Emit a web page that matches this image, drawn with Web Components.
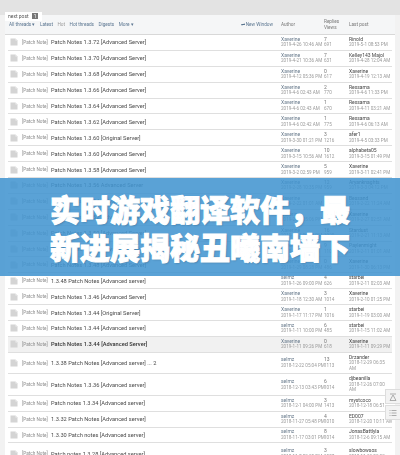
<!DOCTYPE html>
<html lang="zh">
<head>
<meta charset="utf-8">
<title>Patch Notes</title>
<style>
  html, body { margin: 0; padding: 0; }
  body { width: 400px; height: 455px; overflow: hidden; position: relative; background: #f2f2f2; font-family: Roboto, "Liberation Sans", sans-serif; }
</style>
</head>
<body>
<forum-board>
  <thread-row tag="[Patch Note]" title="Patch Notes 1.3.72 [Advanced Server]" author="Xaverine" date="2019-4-26 10:46 AM" replies="7" views="691" last="Rinold" lastdate="2019-5-1 08:53 PM"></thread-row>
  <thread-row tag="[Patch Note]" title="Patch Notes 1.3.70 [Advanced Server]" author="Xaverine" date="2019-4-21 10:36 AM" replies="7" views="631" last="Kelley143 Majol" lastdate="2019-4-28 12:04 AM"></thread-row>
  <thread-row tag="[Patch Note]" title="Patch Notes 1.3.68 [Advanced Server]" author="Xaverine" date="2019-4-12 05:36 PM" replies="0" views="617" last="Xaverine" lastdate="2019-4-19 12:13 AM"></thread-row>
  <thread-row tag="[Patch Note]" title="Patch Notes 1.3.66 [Advanced Server]" author="Xaverine" date="2019-4-6 02:43 AM" replies="2" views="770" last="Rexsama" lastdate="2019-4-6 11:33 PM"></thread-row>
  <thread-row tag="[Patch Note]" title="Patch Notes 1.3.64 [Advanced Server]" author="Xaverine" date="2019-4-6 02:43 AM" replies="1" views="670" last="Rexsama" lastdate="2019-4-11 03:21 AM"></thread-row>
  <thread-row tag="[Patch Note]" title="Patch Notes 1.3.62 [Advanced Server]" author="Xaverine" date="2019-4-6 02:42 AM" replies="1" views="775" last="Rexsama" lastdate="2019-4-6 06:13 AM"></thread-row>
  <thread-row tag="[Patch Note]" title="Patch Notes 1.3.60 [Original Server]" author="Xaverine" date="2019-3-30 01:21 PM" replies="3" views="1216" last="afer1" lastdate="2019-4-5 03:33 PM"></thread-row>
  <thread-row tag="[Patch Note]" title="Patch Notes 1.3.60 [Advanced Server]" author="Xaverine" date="2019-3-15 10:56 AM" replies="10" views="1612" last="alphabeta05" lastdate="2019-3-15 01:49 PM"></thread-row>
  <thread-row tag="[Patch Note]" title="Patch Notes 1.3.58 [Advanced Server]" author="Xaverine" date="2019-3-2 02:59 PM" replies="5" views="959" last="Xaverine" lastdate="2019-3-11 02:41 PM"></thread-row>
  <thread-row tag="[Patch Note]" title="Patch Notes 1.3.56 Advanced Server" author="Xaverine" date="2019-2-28 10:35 PM" replies="12" views="959" last="Aryanknaghts" lastdate="2019-3-3 04:12 PM"></thread-row>
  <thread-row tag="[Patch Note]" title="Patch Notes 1.3.54 [Advanced Server]" author="Xaverine" date="2019-2-22 01:01 AM" replies="1" views="807" last="Bessand" lastdate="2019-2-22 11:24 AM"></thread-row>
  <thread-row tag="[Patch Note]" title="Patch Notes 1.3.52 [Advanced Server]" author="Xaverine" date="2019-2-20 05:06 PM" replies="4" views="812" last="Xaverine" lastdate="2019-2-27 02:51 AM"></thread-row>
  <thread-row tag="[Patch Note]" title="Patch Notes 1.3.50 [Advanced Server]" author="Xaverine" date="2019-2-15 09:13 PM" replies="16" views="1020" last="Stardust" lastdate="2019-2-21 11:13 AM"></thread-row>
  <thread-row tag="[Patch Note]" title="Patch Notes 1.3.50 [Advanced Server] ... 2" author="Xaverine" date="2019-2-9 10:21 AM" replies="9" views="1104" last="Paylenmight" lastdate="2019-2-11 01:01 AM"></thread-row>
  <thread-row tag="[Patch Note]" title="Patch Notes 1.3.48 [Advanced Server]" author="Xaverine" date="2019-1-29 08:28 PM" replies="0" views="486" last="Xaverine" lastdate="2019-1-30 06:13 PM"></thread-row>
  <thread-row tag="[Patch Note]" title="1.3.48 Patch Notes [Advanced server]" author="selmz" date="2019-1-26 09:00 PM" replies="4" views="626" last="starbei" lastdate="2019-2-11 02:03 AM"></thread-row>
  <thread-row tag="[Patch Note]" title="Patch Notes 1.3.46 [Advanced Server]" author="Xaverine" date="2019-1-18 12:30 AM" replies="3" views="1014" last="Xaverine" lastdate="2019-2-10 01:25 PM"></thread-row>
  <thread-row tag="[Patch Note]" title="Patch Notes 1.3.44 [Original Server]" author="Xaverine" date="2019-1-17 11:17 PM" replies="1" views="1016" last="starbei" lastdate="2019-1-19 03:00 AM"></thread-row>
  <thread-row tag="[Patch Note]" title="Patch Notes 1.3.44 [Advanced server]" author="selmz" date="2019-1-11 10:00 PM" replies="6" views="485" last="starbei" lastdate="2019-1-15 11:02 AM"></thread-row>
  <thread-row hot tag="[Patch Note]" title="Patch Notes 1.3.44 [Advanced Server]" author="Xaverine" date="2019-1-11 09:26 PM" replies="0" views="618" last="Xaverine" lastdate="2019-1-11 09:29 PM"></thread-row>
  <thread-row tall tag="[Patch Note]" title="1.3.38 Patch Notes [Advanced server] ... 2" author="selmz" date="2018-12-22 05:04 PM" replies="13" views="1113" last="Drzander" lastdate="2018-12-29 06:35 AM"></thread-row>
  <thread-row tall tag="[Patch Note]" title="Patch Notes 1.3.36 [Advanced server]" author="selmz" date="2018-12-13 03:43 PM" replies="6" views="1014" last="djbeanilla" lastdate="2018-12-26 07:00 AM"></thread-row>
  <thread-row tag="[Patch Note]" title="Patch notes 1.3.34 [Advanced server]" author="selmz" date="2018-12-1 04:00 PM" replies="3" views="1413" last="mystcoco" lastdate="2018-12-18 06:51"></thread-row>
  <thread-row tag="[Patch Note]" title="1.3.32 Patch Notes [Advanced server]" author="selmz" date="2018-11-27 05:48 PM" replies="4" views="1010" last="ED007" lastdate="2018-12-20 10:11 AM"></thread-row>
  <thread-row tag="[Patch Note]" title="1.3.30 Patch notes [Advanced server]" author="selmz" date="2018-11-17 03:01 PM" replies="8" views="1014" last="JonasBattlyla" lastdate="2018-12-6 09:15 AM"></thread-row>
  <thread-row tall tag="[Patch Note]" title="Patch notes 1.3.28 [Advanced server]" author="selmz" date="2018-11-7 02:20 PM" replies="3" views="1007" last="slowbowsos" lastdate="2018-11-12 02:32"></thread-row>
</forum-board>
<side-tools></side-tools>
<headline-banner>实时游戏翻译软件，最新进展揭秘丑曦南墙下</headline-banner>

<script>
const boardTemplate = document.createElement('template');
boardTemplate.innerHTML = `
  <style>
    :host {
      display: block;
      height: 455px;
      overflow: hidden;
      color: #444;
      filter: blur(0.4px);
    }
    .top {
      height: 15px;
      background: #e3e3e3;
      padding: 3px 0 0 5px;
      box-sizing: border-box;
    }
    .next {
      display: inline-flex;
      align-items: center;
      gap: 3px;
      height: 9px;
      padding: 0 4px 0 3px;
      background: #fff;
      font-size: 5px;
      color: #555;
    }
    .next b {
      background: #777;
      color: #fff;
      padding: 0 2px;
      font-weight: 400;
    }
    .panel {
      margin: 0 5px;
      background: #fff;
      padding: 0 3px;
    }
    .filters {
      display: grid;
      grid-template-columns: 273px 43px 25px 1fr;
      align-items: center;
      height: 19px;
      margin: 0 -3px;
      padding: 0 3px;
      background: #f5f6f7;
      border-bottom: 1px solid #d8d8d8;
      font-size: 4.7px;
      color: #777;
    }
    .nav {
      display: flex;
      justify-content: space-between;
      align-items: center;
      padding-left: 1px;
      padding-right: 8px;
    }
    .links {
      display: flex;
      gap: 4.5px;
      color: #5a7590;
    }
    .links .muted { color: #999; }
    .win { color: #5a7590; }
    .replies { line-height: 5.6px; }
  </style>
  <div class="top"><span class="next">next post <b>1</b></span></div>
  <div class="panel">
    <div class="filters">
      <div class="nav">
        <div class="links">
          <span>All threads ▾</span>
          <span>Latest</span>
          <span class="muted">Hot</span>
          <span>Hot threads</span>
          <span>Digests</span>
          <span>More ▾</span>
        </div>
        <span class="win">⇌ New Window</span>
      </div>
      <span>Author</span>
      <span class="replies">Replies<br>Views</span>
      <span>Last post</span>
    </div>
    <slot></slot>
  </div>
`;

class ForumBoard extends HTMLElement {
  constructor() {
    super();
    const shadow = this.attachShadow({ mode: 'open' });
    shadow.append(boardTemplate.content.cloneNode(true));
  }
}

const rowTemplate = document.createElement('template');
rowTemplate.innerHTML = `
  <style>
    :host {
      display: grid;
      grid-template-columns: 273px 43px 25px 1fr;
      align-items: center;
      height: 15.9px;
      box-sizing: border-box;
      border-bottom: 1px solid #dfdfdf;
      background: #fff;
      white-space: nowrap;
      overflow: hidden;
    }
    :host([hot]) { background: #f1f1f1; }
    :host([tall]) { height: 21.5px; }
    :host([tall]) .last { white-space: normal; }
    .name {
      display: flex;
      align-items: center;
      padding-left: 2px;
    }
    svg { width: 8px; height: 8px; margin-right: 4px; flex: none; }
    .tag { font-size: 4.7px; color: #8a8a8a; width: 29px; }
    .title { font-size: 5.7px; color: #4a4a4a; }
    :host([hot]) .title { color: #333; font-weight: 500; }
    .cell { font-size: 4.6px; line-height: 5.6px; color: #9a9a9a; }
    .who { display: block; color: #66788a; font-size: 5px; }
    .last .who { color: #444; }
    .num { display: block; color: #777; font-size: 5px; }
  </style>
  <div class="name">
    <svg viewBox="0 0 8 8"><path d="M0.5 0.5H5.5L7.5 2.5V7.5H0.5Z" fill="#d4d4d4"/><path d="M5.5 0.5V2.5H7.5Z" fill="#eee"/></svg>
    <span class="tag"></span><span class="title"></span>
  </div>
  <div class="cell"><span class="who author"></span><span class="date"></span></div>
  <div class="cell"><span class="num replies"></span><span class="views"></span></div>
  <div class="cell last"><span class="who lastname"></span><span class="lastdate"></span></div>
`;

class ThreadRow extends HTMLElement {
  constructor() {
    super();
    const shadow = this.attachShadow({ mode: 'open' });
    shadow.append(rowTemplate.content.cloneNode(true));
  }

  connectedCallback() {
    const map = { tag: '.tag', title: '.title', author: '.author', date: '.date', replies: '.replies', views: '.views', last: '.lastname', lastdate: '.lastdate' };
    for (const key in map) {
      this.shadowRoot.querySelector(map[key]).textContent = this.getAttribute(key);
    }
  }
}

const toolsTemplate = document.createElement('template');
toolsTemplate.innerHTML = `
  <style>
    :host {
      position: absolute;
      left: 385px;
      top: 389px;
      width: 15px;
      display: flex;
      flex-direction: column;
      gap: 1px;
    }
    div {
      height: 13px;
      background: #f3f3f3;
      border: 1px solid #ddd;
      border-right: 0;
      display: flex;
      align-items: center;
      justify-content: center;
    }
    svg { width: 8px; height: 8px; fill: none; stroke: #999; stroke-width: 0.8; }
  </style>
  <div><svg viewBox="0 0 8 8"><path d="M1 7.5H7L4 2Z M1 1H7"/></svg></div>
  <div><svg viewBox="0 0 8 8"><path d="M2.5 1.5H7.5M2.5 4H7.5M2.5 6.5H7.5M0.5 1.5H1.5M0.5 4H1.5M0.5 6.5H1.5"/></svg></div>
`;

class SideTools extends HTMLElement {
  constructor() {
    super();
    this.attachShadow({ mode: 'open' }).append(toolsTemplate.content.cloneNode(true));
  }
}

const bannerTemplate = document.createElement('template');
bannerTemplate.innerHTML = `
  <style>
    :host {
      position: absolute;
      left: 0;
      top: 178px;
      width: 400px;
      height: 98px;
      box-sizing: border-box;
      padding: 11px 50px 0;
      background: rgba(66, 148, 208, 0.87);
      color: #fff;
      font: 900 30px/38px "Noto Sans CJK SC", sans-serif;
      -webkit-text-stroke: 1px #fff;
      text-shadow: 1px 1px 2px rgba(0, 0, 0, 0.2);
    }
  </style>
  <slot></slot>
`;

class HeadlineBanner extends HTMLElement {
  constructor() {
    super();
    this.attachShadow({ mode: 'open' }).append(bannerTemplate.content.cloneNode(true));
  }
}

customElements.define('thread-row', ThreadRow);
customElements.define('forum-board', ForumBoard);
customElements.define('side-tools', SideTools);
customElements.define('headline-banner', HeadlineBanner);
</script>
</body>
</html>
